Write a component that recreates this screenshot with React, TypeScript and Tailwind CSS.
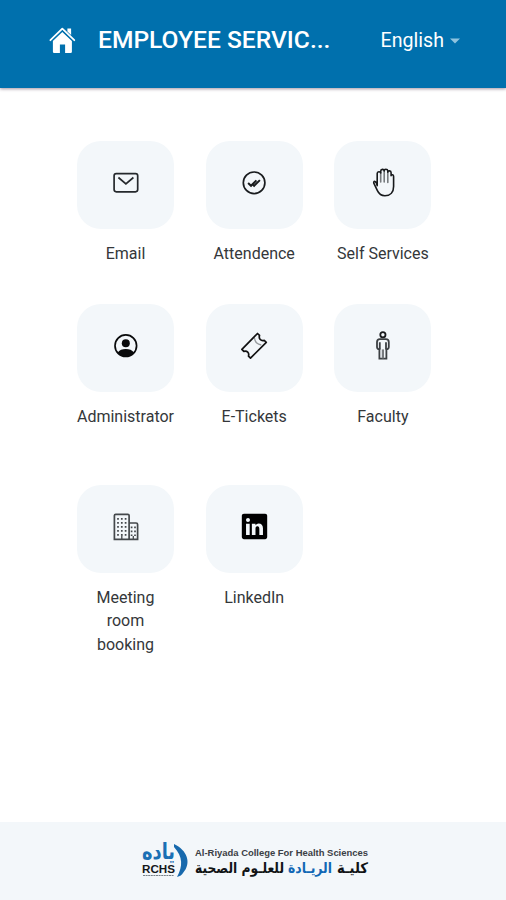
import { ReactNode } from "react";
import { IoLogoLinkedin } from "react-icons/io5";

type Props = {
  label: string;
  icon: ReactNode;
};

const HomeIcon = () => (
  <svg className="w-[27px] h-[27px]" viewBox="0 0 27 27" fill="white">
    <path d="M13.3 4.9 22.9 14v10.8a1.3 1.3 0 0 1-1.3 1.3h-5.5v-8.7h-5.2v8.7H5.2a1.3 1.3 0 0 1-1.3-1.3V14Z" />
    <path d="M18.4 1.4h3.7v6.7l-3.7-3.6Z" />
    <path
      d="m1.4 13.2 11.9-11.5 12 11.5"
      fill="none"
      stroke="white"
      strokeWidth="1.8"
      strokeLinecap="round"
      strokeLinejoin="round"
    />
    <path d="M2.8 14 13.3 3.8 23.8 14" fill="none" stroke="#0070ad" strokeWidth="0.7" />
  </svg>
);

const MailIcon = () => (
  <svg className="size-8" viewBox="0 0 32 32" fill="none" stroke="#25292c">
    <rect x="4.1" y="6.6" width="23.6" height="18.2" rx="2.2" strokeWidth="1.7" />
    <path d="m8.4 10.5 7.5 6.3 7.5-6.3" strokeWidth="1.7" />
  </svg>
);

const CheckIcon = () => (
  <svg className="size-8" viewBox="0 0 32 32" fill="none" stroke="#191c1e">
    <circle cx="16.1" cy="15.8" r="10.8" strokeWidth="1.7" />
    <path d="m10.1 16 2.9 2.8 5.4-5.4M14.5 17.1l1.6 1.8 5.8-5.8" strokeWidth="2" />
  </svg>
);

const HandIcon = () => (
  <svg
    className="size-8"
    viewBox="0 0 32 32"
    fill="none"
    strokeLinecap="round"
    strokeLinejoin="round"
  >
    <path d="M13.7 15V5.4M17.2 15V4.2M20.8 15.5V5.4" stroke="#777b7e" strokeWidth="1.6" />
    <path
      d="M10.2 18.6V6.4c0-2.2 3.3-2.2 3.5-.4V4.2c0-2.4 3.4-2.4 3.5-.3 0-2.2 3.4-2.2 3.6 0v1.3c.2-2 3.3-1.8 3.3.5v3c.3-1.4 2.5-1.2 2.5.9v10c0 5.5-3.2 9.2-8.7 9.2-4 0-6.1-2.1-7.5-5.1l-3.6-7.5c-.6-2.6 2.3-2.9 3.4 2.4Z"
      stroke="#17191b"
      strokeWidth="1.6"
    />
  </svg>
);

const PersonCircleIcon = () => (
  <svg className="size-8" viewBox="0 0 32 32">
    <circle cx="15.8" cy="15.7" r="10.8" fill="none" stroke="#090a0b" strokeWidth="1.7" />
    <circle cx="15.8" cy="13.2" r="4" fill="#090a0b" />
    <path d="M7.7 22.5c3-4.6 13.2-4.6 16.2 0-3.2 5.8-13 5.8-16.2 0Z" fill="#090a0b" />
  </svg>
);

const TicketIcon = () => (
  <svg className="size-8" viewBox="0 0 32 32" fill="none" stroke="#111" strokeWidth="1.7">
    <path
      d="m3.9 19.4 15.6-15.9 2 1.9c-1 3.4 1.4 5.9 4.7 5l2.1 1.9-15.8 15.8-2-2c1-3.3-1.5-5.7-4.7-4.7Z"
      strokeLinejoin="round"
    />
    <path d="M16.5 8c.3 3.7 3.2 6.3 6.8 7" stroke="#969a9d" strokeWidth="1.3" />
  </svg>
);

const PersonIcon = () => (
  <svg className="size-8" viewBox="0 0 32 32" fill="none" stroke="#3c4043" strokeWidth="1.8">
    <circle cx="15.9" cy="4.7" r="2.6" stroke="#191b1d" />
    <path d="M12.9 9.2h6c1.9 0 2.9 1.2 2.9 3v4.9c0 1.5-.9 2.2-2.4 2.2v9.3h-7v-9.3c-1.5 0-2.4-.7-2.4-2.2v-4.9c0-1.8 1-3 2.9-3Z" />
    <path d="M12.8 12.2v7.2m6.2-7.2v7.2" />
    <path d="M15.9 19.4v9" stroke="#777b7e" strokeWidth="2.2" />
  </svg>
);

const BuildingIcon = () => (
  <svg className="size-8" viewBox="0 0 32 32" fill="none" stroke="#44484b">
    <path
      d="M19.1 28.3V4.6c0-.8-.5-1.3-1.3-1.3H5.7c-.8 0-1.3.5-1.3 1.3v23.7h23.2V13.4c0-.8-.6-1.4-1.5-1.4h-7"
      strokeWidth="1.7"
    />
    <path d="M8 7v18M11.8 7v18M15.6 7v18" strokeWidth="1.7" strokeDasharray="1.7 2.3" />
    <path d="M21.6 15.5V25M25 15.5V25" strokeWidth="1.7" strokeDasharray="1.7 2.3" />
    <path d="M11.8 28v-3.5M23.3 28v-3" strokeWidth="1.3" />
  </svg>
);

const ServiceCard = ({ label, icon }: Props) => (
  <button className="flex flex-col items-center w-[97px]">
    <div className="flex items-center justify-center w-[97px] h-[88px] rounded-[24px] bg-[#f3f7fa]">
      <div className="-mt-1">{icon}</div>
    </div>
    <span className="mt-[13px] w-[97px] flex justify-center text-center text-[16px] leading-[23.5px] text-[#34373a]">
      {label === "Meeting room booking" ? (
        <span className="w-[70px]">{label}</span>
      ) : (
        <span className="whitespace-nowrap">{label}</span>
      )}
    </span>
  </button>
);

const CollegeLogo = () => (
  <svg className="w-[232px] h-[44px] overflow-visible" viewBox="0 0 232 44">
    <g transform="translate(5 18) scale(1 1.3)">
      <text
        textLength="33"
        lengthAdjust="spacingAndGlyphs"
        fill="#1a70b5"
        fontFamily="DejaVu Sans, sans-serif"
        fontSize="17"
        fontWeight="700"
      >
        ياده
      </text>
    </g>
    <path d="M37 3c13 6 18 19 9 29-1 2-3 3-6 4 6-11 6-20-3-30Z" fill="#1769ad" />
    <text
      x="5"
      y="32"
      textLength="33"
      lengthAdjust="spacingAndGlyphs"
      fill="#15181a"
      fontFamily="Liberation Sans, sans-serif"
      fontSize="11.5"
      fontWeight="700"
    >
      RCHS
    </text>
    <path d="M6 34.5h31" stroke="#778087" strokeWidth="1.2" strokeDasharray="2 .6" />
    <text
      x="58"
      y="14.5"
      textLength="173"
      lengthAdjust="spacingAndGlyphs"
      fill="#3b4045"
      fontFamily="Liberation Sans, sans-serif"
      fontSize="8.5"
      fontWeight="700"
    >
      Al-Riyada College For Health Sciences
    </text>
    <g fontFamily="DejaVu Sans, sans-serif" fontSize="14.5" fontWeight="700" fill="#111416">
      <text x="200" y="32" textLength="31" lengthAdjust="spacingAndGlyphs">
        كليـة
      </text>
      <text x="151" y="32" textLength="44" lengthAdjust="spacingAndGlyphs" fill="#1167b5">
        الريـادة
      </text>
      <text x="58" y="32" textLength="89" lengthAdjust="spacingAndGlyphs">
        للعلـوم الصحية
      </text>
    </g>
  </svg>
);

const services: Props[] = [
  { label: "Email", icon: <MailIcon /> },
  { label: "Attendence", icon: <CheckIcon /> },
  { label: "Self Services", icon: <HandIcon /> },
  { label: "Administrator", icon: <PersonCircleIcon /> },
  { label: "E-Tickets", icon: <TicketIcon /> },
  { label: "Faculty", icon: <PersonIcon /> },
];

const App = () => {
  return (
    <div className="flex flex-col w-full h-[900px] bg-white font-['Roboto',sans-serif]">
      <header className="flex items-center h-[88px] shrink-0 pl-[49px] pr-[46px] pb-[7px] bg-[#0070ad] text-white shadow-[0_1px_3px_rgba(50,20,50,0.45)]">
        <HomeIcon />
        <h1 className="ml-[22px] w-[240px] text-[24.6px] font-medium whitespace-nowrap">
          EMPLOYEE SERVIC...
        </h1>
        <button className="flex items-center ml-auto pt-px text-[19.6px]">
          English
          <svg className="ml-[6px] w-[10px] h-[6px]" viewBox="0 0 10 6">
            <path d="M0 .5h10l-5 5Z" fill="#8fc3df" />
          </svg>
        </button>
      </header>
      <main className="grow pl-[77px] pt-[53px]">
        <div className="grid grid-cols-[97px_97px_97px] gap-x-[31.7px] gap-y-[38.5px]">
          {services.map((service) => (
            <ServiceCard key={service.label} {...service} />
          ))}
        </div>
        <div className="grid grid-cols-[97px_97px_97px] items-start gap-x-[31.7px] mt-[56px]">
          <ServiceCard label="Meeting room booking" icon={<BuildingIcon />} />
          <ServiceCard label="LinkedIn" icon={<IoLogoLinkedin className="size-[29px] text-black" />} />
        </div>
      </main>
      <footer className="flex justify-center h-[78px] shrink-0 pt-[19px] bg-[#f3f7fa]">
        <CollegeLogo />
      </footer>
    </div>
  );
};

export default App;
